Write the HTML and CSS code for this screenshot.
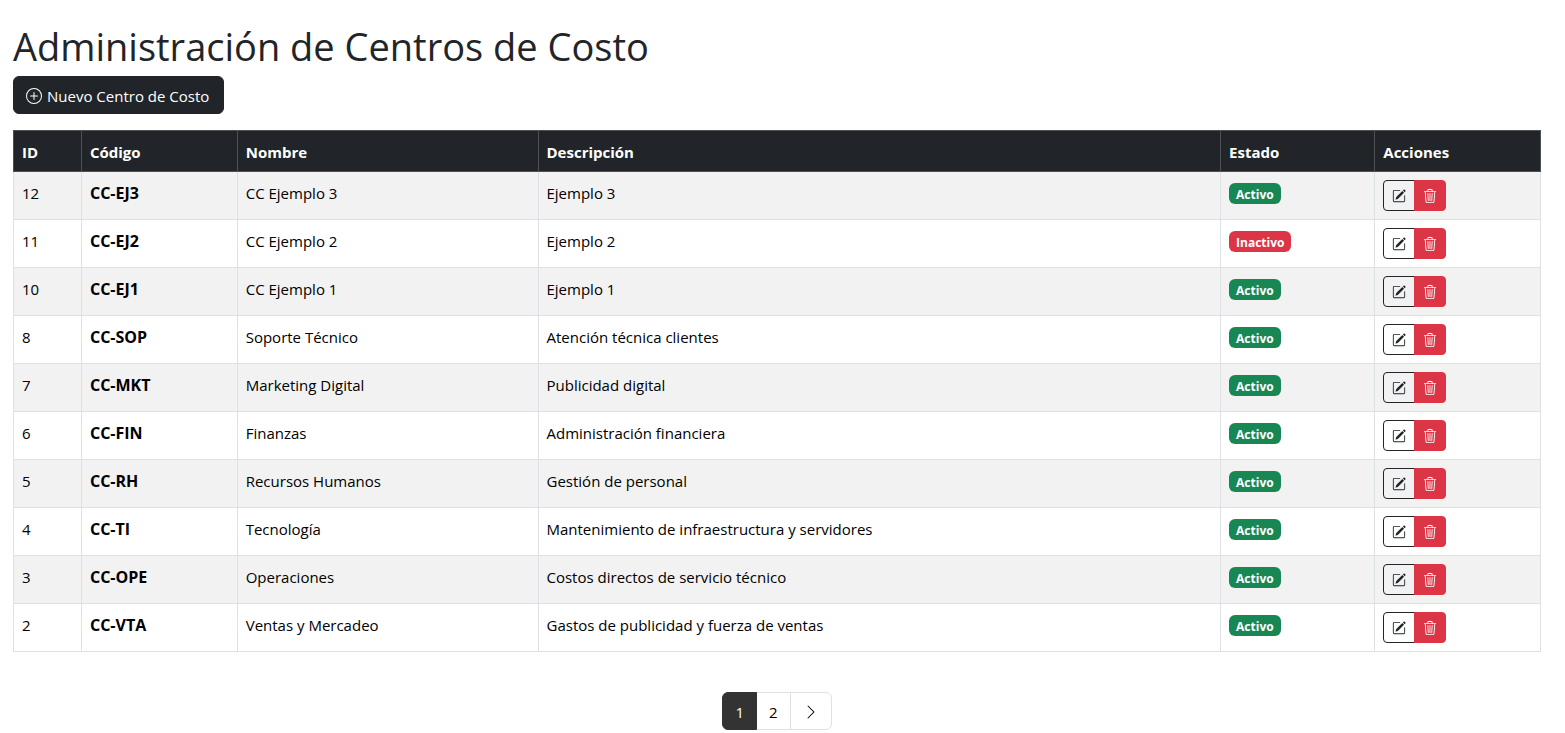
FILE: index.html
```
<!DOCTYPE html>
<html lang="es">
<head>
<meta charset="utf-8">
<title>Administración de Centros de Costo</title>
<link rel="stylesheet" href="styles.css">
</head>
<body>
<svg class="sprite" aria-hidden="true">
  <symbol id="plus-circle" viewBox="0 0 16 16"><path d="M8 15A7 7 0 1 1 8 1a7 7 0 0 1 0 14m0 1A8 8 0 1 0 8 0a8 8 0 0 0 0 16"/><path d="M8 4a.5.5 0 0 1 .5.5v3h3a.5.5 0 0 1 0 1h-3v3a.5.5 0 0 1-1 0v-3h-3a.5.5 0 0 1 0-1h3v-3A.5.5 0 0 1 8 4"/></symbol>
  <symbol id="pencil-square" viewBox="0 0 16 16"><path d="M15.502 1.94a.5.5 0 0 1 0 .706L14.459 3.69l-2-2L13.502.646a.5.5 0 0 1 .707 0l1.293 1.293zm-1.75 2.456-2-2L4.939 9.21a.5.5 0 0 0-.121.196l-.805 2.414a.25.25 0 0 0 .316.316l2.414-.805a.5.5 0 0 0 .196-.12z"/><path fill-rule="evenodd" d="M1 13.5A1.5 1.5 0 0 0 2.5 15h11a1.5 1.5 0 0 0 1.5-1.5v-6a.5.5 0 0 0-1 0v6a.5.5 0 0 1-.5.5h-11a.5.5 0 0 1-.5-.5v-11a.5.5 0 0 1 .5-.5H9a.5.5 0 0 0 0-1H2.5A1.5 1.5 0 0 0 1 2.5z"/></symbol>
  <symbol id="trash" viewBox="0 0 16 16"><path d="M6.5 1h3a.5.5 0 0 1 .5.5v1H6v-1a.5.5 0 0 1 .5-.5M11 2.5v-1A1.5 1.5 0 0 0 9.5 0h-3A1.5 1.5 0 0 0 5 1.5v1H1.5a.5.5 0 0 0 0 1h.538l.853 10.66A2 2 0 0 0 4.885 16h6.23a2 2 0 0 0 1.994-1.84l.853-10.66h.538a.5.5 0 0 0 0-1zm1.958 1-.846 10.58a1 1 0 0 1-.997.92h-6.23a1 1 0 0 1-.997-.92L3.042 3.5zm-7.487 1a.5.5 0 0 1 .528.47l.5 8.5a.5.5 0 0 1-.998.06L5 5.03a.5.5 0 0 1 .47-.53zm5.058 0a.5.5 0 0 1 .47.53l-.5 8.5a.5.5 0 1 1-.998-.06l.5-8.5a.5.5 0 0 1 .528-.47M8 4.5a.5.5 0 0 1 .5.5v8.5a.5.5 0 0 1-1 0V5a.5.5 0 0 1 .5-.5"/></symbol>
  <symbol id="chevron-right" viewBox="0 0 16 16"><path fill-rule="evenodd" d="M4.646 1.646a.5.5 0 0 1 .708 0l6 6a.5.5 0 0 1 0 .708l-6 6a.5.5 0 0 1-.708-.708L10.293 8 4.646 2.354a.5.5 0 0 1 0-.708"/></symbol>
</svg>
<main class="page">
  <h1 class="title">Administración de Centros de Costo</h1>
  <button type="button" class="btn-new"><svg class="icon"><use href="#plus-circle"/></svg>Nuevo Centro de Costo</button>
  <table class="table">
    <colgroup><col class="col-id"><col class="col-code"><col class="col-name"><col class="col-desc"><col class="col-state"><col class="col-actions"></colgroup>
    <thead><tr><th scope="col">ID</th><th scope="col">Código</th><th scope="col">Nombre</th><th scope="col">Descripción</th><th scope="col">Estado</th><th scope="col">Acciones</th></tr></thead>
    <tbody>
      <tr><td>12</td><td><strong>CC-EJ3</strong></td><td>CC Ejemplo 3</td><td>Ejemplo 3</td><td><span class="badge active">Activo</span></td><td><div class="actions"><button type="button" class="edit" aria-label="Editar"><svg class="icon"><use href="#pencil-square"/></svg></button><button type="button" class="delete" aria-label="Eliminar"><svg class="icon"><use href="#trash"/></svg></button></div></td></tr>
      <tr><td>11</td><td><strong>CC-EJ2</strong></td><td>CC Ejemplo 2</td><td>Ejemplo 2</td><td><span class="badge inactive">Inactivo</span></td><td><div class="actions"><button type="button" class="edit" aria-label="Editar"><svg class="icon"><use href="#pencil-square"/></svg></button><button type="button" class="delete" aria-label="Eliminar"><svg class="icon"><use href="#trash"/></svg></button></div></td></tr>
      <tr><td>10</td><td><strong>CC-EJ1</strong></td><td>CC Ejemplo 1</td><td>Ejemplo 1</td><td><span class="badge active">Activo</span></td><td><div class="actions"><button type="button" class="edit" aria-label="Editar"><svg class="icon"><use href="#pencil-square"/></svg></button><button type="button" class="delete" aria-label="Eliminar"><svg class="icon"><use href="#trash"/></svg></button></div></td></tr>
      <tr><td>8</td><td><strong>CC-SOP</strong></td><td>Soporte Técnico</td><td>Atención técnica clientes</td><td><span class="badge active">Activo</span></td><td><div class="actions"><button type="button" class="edit" aria-label="Editar"><svg class="icon"><use href="#pencil-square"/></svg></button><button type="button" class="delete" aria-label="Eliminar"><svg class="icon"><use href="#trash"/></svg></button></div></td></tr>
      <tr><td>7</td><td><strong>CC-MKT</strong></td><td>Marketing Digital</td><td>Publicidad digital</td><td><span class="badge active">Activo</span></td><td><div class="actions"><button type="button" class="edit" aria-label="Editar"><svg class="icon"><use href="#pencil-square"/></svg></button><button type="button" class="delete" aria-label="Eliminar"><svg class="icon"><use href="#trash"/></svg></button></div></td></tr>
      <tr><td>6</td><td><strong>CC-FIN</strong></td><td>Finanzas</td><td>Administración financiera</td><td><span class="badge active">Activo</span></td><td><div class="actions"><button type="button" class="edit" aria-label="Editar"><svg class="icon"><use href="#pencil-square"/></svg></button><button type="button" class="delete" aria-label="Eliminar"><svg class="icon"><use href="#trash"/></svg></button></div></td></tr>
      <tr><td>5</td><td><strong>CC-RH</strong></td><td>Recursos Humanos</td><td>Gestión de personal</td><td><span class="badge active">Activo</span></td><td><div class="actions"><button type="button" class="edit" aria-label="Editar"><svg class="icon"><use href="#pencil-square"/></svg></button><button type="button" class="delete" aria-label="Eliminar"><svg class="icon"><use href="#trash"/></svg></button></div></td></tr>
      <tr><td>4</td><td><strong>CC-TI</strong></td><td>Tecnología</td><td>Mantenimiento de infraestructura y servidores</td><td><span class="badge active">Activo</span></td><td><div class="actions"><button type="button" class="edit" aria-label="Editar"><svg class="icon"><use href="#pencil-square"/></svg></button><button type="button" class="delete" aria-label="Eliminar"><svg class="icon"><use href="#trash"/></svg></button></div></td></tr>
      <tr><td>3</td><td><strong>CC-OPE</strong></td><td>Operaciones</td><td>Costos directos de servicio técnico</td><td><span class="badge active">Activo</span></td><td><div class="actions"><button type="button" class="edit" aria-label="Editar"><svg class="icon"><use href="#pencil-square"/></svg></button><button type="button" class="delete" aria-label="Eliminar"><svg class="icon"><use href="#trash"/></svg></button></div></td></tr>
      <tr><td>2</td><td><strong>CC-VTA</strong></td><td>Ventas y Mercadeo</td><td>Gastos de publicidad y fuerza de ventas</td><td><span class="badge active">Activo</span></td><td><div class="actions"><button type="button" class="edit" aria-label="Editar"><svg class="icon"><use href="#pencil-square"/></svg></button><button type="button" class="delete" aria-label="Eliminar"><svg class="icon"><use href="#trash"/></svg></button></div></td></tr>
    </tbody>
  </table>
  <nav class="pagination" aria-label="Paginación">
    <a class="page-link current" href="#" aria-current="page">1</a>
    <a class="page-link" href="#">2</a>
    <a class="page-link" href="#" aria-label="Siguiente"><svg class="icon"><use href="#chevron-right"/></svg></a>
  </nav>
</main>
</body>
</html>
```
FILE: styles.css
```
* { box-sizing: border-box; }

body {
  margin: 0;
  background: #fff;
  color: #212529;
  font-family: "Segoe UI", "Open Sans", "Noto Sans", sans-serif;
  font-size: 15px;
  line-height: 24px;
}

.sprite { display: none; }

.icon {
  display: block;
  width: 16px;
  height: 16px;
  fill: currentColor;
}

.page { padding: 22px 24px 0 13px; }

.title {
  margin: 0 0 6px;
  font-size: 38px;
  font-weight: 400;
  line-height: 48px;
}

button {
  font: inherit;
  cursor: pointer;
}

.btn-new {
  display: flex;
  align-items: center;
  gap: 5px;
  margin-bottom: 16px;
  padding: 7px 14px 5px 12px;
  border: 1px solid #212529;
  border-radius: 6px;
  background: #212529;
  color: #fff;
}

.table {
  width: 100%;
  table-layout: fixed;
  border-collapse: collapse;
  color: #000;
}

.col-id { width: 4.45%; }
.col-code { width: 10.2%; }
.col-name { width: 19.7%; }
.col-desc { width: 44.7%; }
.col-state { width: 10.1%; }

.table th,
.table td {
  padding: 8px;
  border: 1px solid #dee2e6;
  text-align: left;
  vertical-align: top;
}

.table td { line-height: 26px; }

.table th {
  padding: 9px 8px 7px;
  border-color: #4d5154;
  background: #212529;
  color: #fff;
  font-weight: 700;
}

.table strong { font-size: 16px; }

.table tbody tr:nth-child(odd) { background: #f2f2f2; }

.table .badge {
  display: block;
  width: fit-content;
  margin-top: 3px;
  padding: 5px 7px 3px;
  border-radius: 6px;
  color: #fff;
  font-size: 12px;
  font-weight: 700;
  line-height: 13px;
}

.active { background: #198754; }
.inactive { background: #dc3545; }

.actions { display: flex; }

.edit,
.delete {
  display: flex;
  align-items: center;
  justify-content: center;
  width: 32px;
  height: 31px;
  padding: 0;
  border: 1px solid #212529;
  border-radius: 4px 0 0 4px;
  background: transparent;
  color: #212529;
}

.delete {
  margin-left: -1px;
  border-color: #dc3545;
  border-radius: 0 4px 4px 0;
  background: #dc3545;
  color: #fff;
}

.actions .icon {
  width: 14px;
  height: 14px;
}

.pagination {
  display: flex;
  justify-content: center;
  margin-top: 40px;
}

.page-link {
  display: flex;
  align-items: center;
  padding: 7px 12px 5px;
  border: 1px solid #dee2e6;
  color: #000;
  text-decoration: none;
}

.page-link + .page-link { margin-left: -1px; }

.page-link:first-child { border-radius: 6px 0 0 6px; }
.page-link:last-child { border-radius: 0 6px 6px 0; }

.page-link.current {
  z-index: 1;
  border-color: #333;
  background: #333;
  color: #fff;
}
```
